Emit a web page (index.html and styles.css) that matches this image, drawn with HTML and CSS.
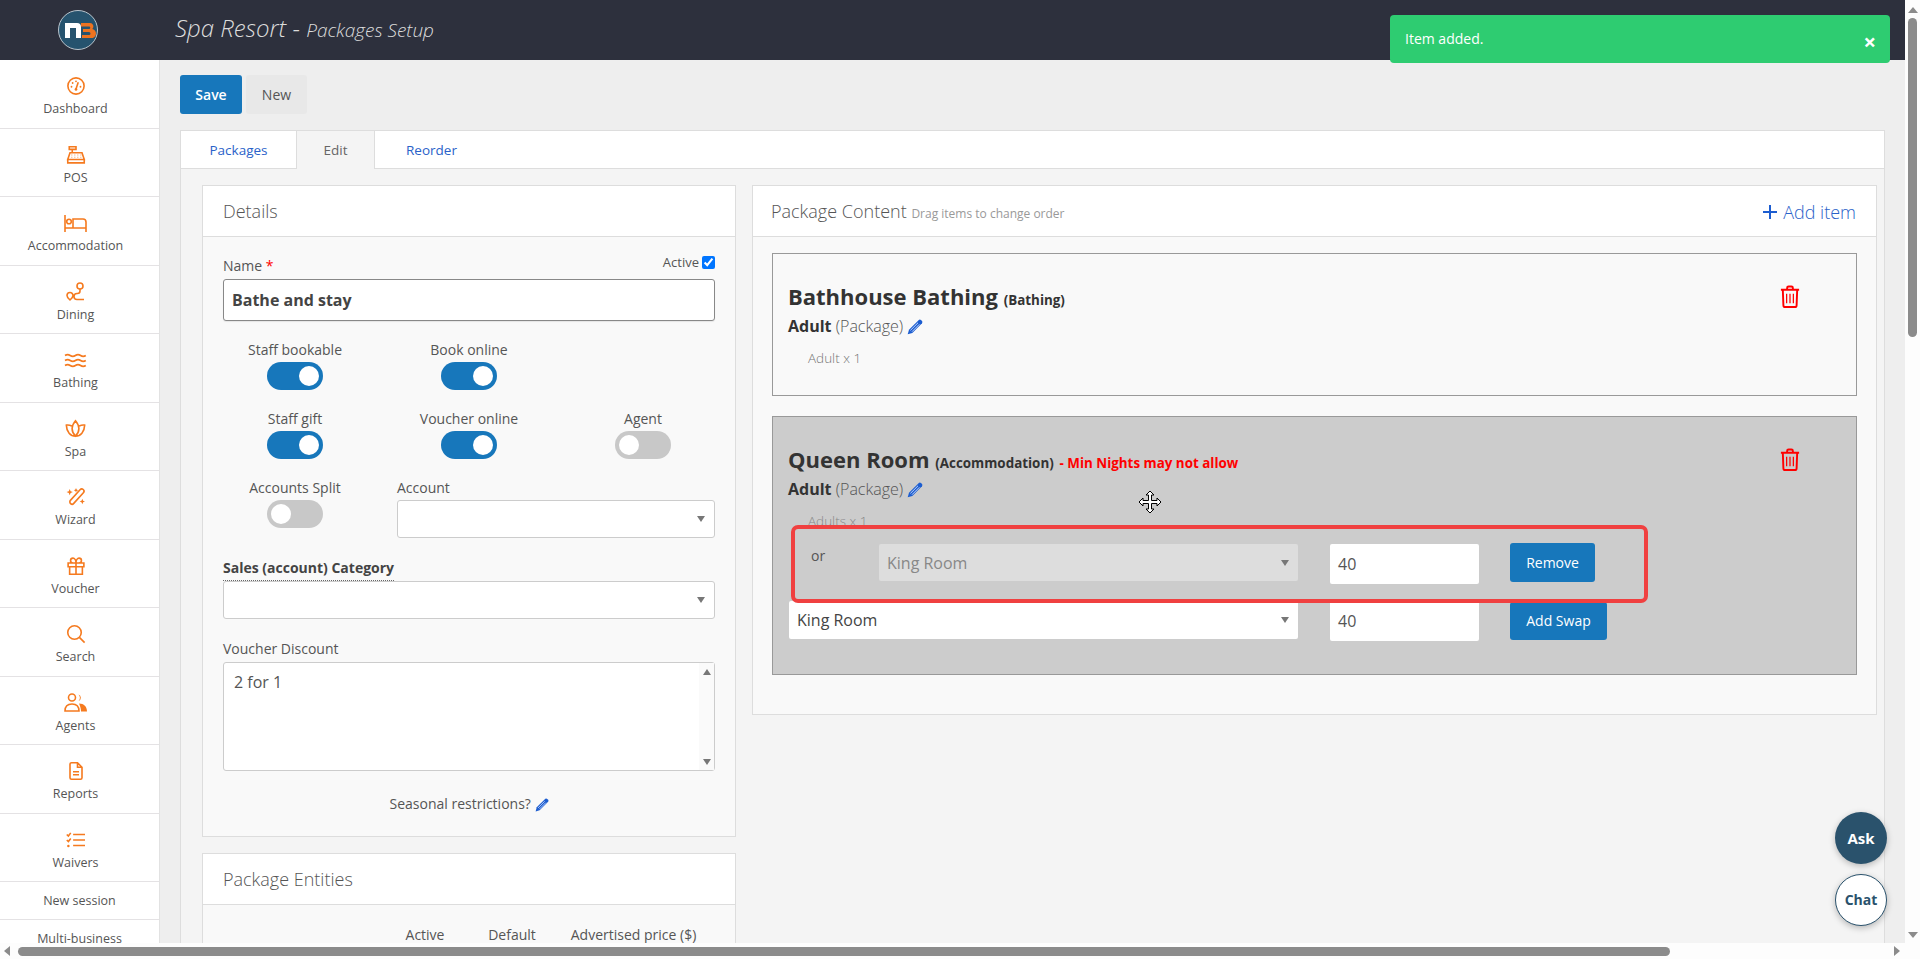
FILE: index.html
```html
<!DOCTYPE html>
<html lang="en">
<head>
<meta charset="utf-8">
<title>Spa Resort - Packages Setup</title>
<link rel="stylesheet" href="styles.css">
</head>
<body>
<svg class="defs" width="0" height="0" aria-hidden="true">
  <symbol id="pencil" viewBox="0 0 16 16"><path d="M11.800.9Q12.900.1 14 1l1 1.100q.9 1.100 0 2.100L5.300 14 .7 15.300 2 10.700Z" fill="#1c5dd0"/><path d="M3.400 11.400 11 3.800M5 12.700 12.400 5.300" stroke="#d5e3ff" stroke-width=".9" fill="none"/></symbol>
  <symbol id="trash" viewBox="0 0 20 24"><g fill="none" stroke="#f00" stroke-width="2"><path d="M.5 5h19M7 5V3a1.500 1.500 0 0 1 1.500-1.500h3A1.500 1.500 0 0 1 13 3v2M2.500 5l.6 16a2 2 0 0 0 2 2h9.800a2 2 0 0 0 2-2l.6-16"/><path d="M6.500 9v10M10 9v10M13.500 9v10" stroke-width="1.300"/></g></symbol>
</svg>
<div class="viewport">
  <div class="page-row">
    <div class="page">
      <header class="topbar">
        <div class="brand">
          <svg class="logo" width="40" height="40" viewBox="0 0 40 40" role="img" aria-label="NB logo"><circle cx="20" cy="20" r="19.500" fill="#26536e" stroke="#b9c4cc"/><path d="M7 28V13h12a4 4 0 0 1 4 4v11h-5V18h-6v10Z" fill="#fff"/><path d="M23 13h9a3.500 3.500 0 0 1 2.400 6 3.800 3.800 0 0 1-2 9H24v-3h7a1.500 1.500 0 0 0 0-3h-6v-3h6a1.300 1.300 0 0 0 0-2.600h-8Z" fill="#ee7320"/></svg>
        </div>
        <h1 class="page-title">Spa Resort - <small>Packages Setup</small></h1>
      </header>
      <div class="below">
        <nav class="sidebar">
          <a class="nav-item"><span class="nav-icon"><svg width="18" height="18" viewBox="0 0 24 24"><circle cx="12" cy="12" r="10.800"/><path d="M12 16 15 7"/><circle class="dot" cx="12" cy="16.500" r="1.800"/><circle class="dot" cx="6" cy="13" r="1.200"/><circle class="dot" cx="7.500" cy="8" r="1.200"/><circle class="dot" cx="12" cy="5.800" r="1.200"/><circle class="dot" cx="18" cy="13" r="1.200"/></svg></span><span>Dashboard</span></a>
          <a class="nav-item"><span class="nav-icon"><svg width="18" height="18" viewBox="0 0 24 24"><path d="M3 1h9v3.500H3zM7 4.500V9M4 9h16l3 9H1zM1 18h22v4.500H1z"/><path class="thin" d="M6 12h1M10 12h1M14 12h1M18 12h1M6 15h1M10 15h1M14 15h1M18 15h1"/></svg></span><span>POS</span></a>
          <a class="nav-item"><span class="nav-icon"><svg width="23" height="17" viewBox="0 0 23 17"><path d="M1 0v17M1 13h21M22 17V7a3 3 0 0 0-3-3H9v9"/><circle cx="5" cy="6.500" r="2.300"/></svg></span><span>Accommodation</span></a>
          <a class="nav-item"><span class="nav-icon"><svg width="19" height="19" viewBox="0 0 19 19"><circle cx="14" cy="4" r="3"/><path d="M14 7v2a2.500 2.500 0 0 1-2.500 2.500H11a3 3 0 0 0 0 6h7M4 18s-3-2.500-3-4.500a3 3 0 0 1 6 0C7 15.500 4 18 4 18Z"/></svg></span><span>Dining</span></a>
          <a class="nav-item"><span class="nav-icon"><svg width="21" height="15" viewBox="0 0 21 15"><path d="M0 2.500q2.600-1.800 5.200 0t5.200 0 5.200 0 5.200 0M0 7.500q2.600-1.800 5.200 0t5.200 0 5.200 0 5.200 0M0 12.500q2.600-1.800 5.200 0t5.200 0 5.200 0 5.200 0"/></svg></span><span>Bathing</span></a>
          <a class="nav-item"><span class="nav-icon"><svg width="21" height="17" viewBox="0 0 24 20"><path d="M12 1C9.500 4 8 7 8 10c0 4 2 7 4 9 2-2 4-5 4-9 0-3-1.500-6-4-9ZM7.500 7C5.500 6 3.500 5.700 1.200 6 1.500 14 6 19 12 19c6 0 10.500-5 10.800-13-2.300-.3-4.300 0-6.300 1"/></svg></span><span>Spa</span></a>
          <a class="nav-item"><span class="nav-icon"><svg width="20" height="18" viewBox="0 0 22 20"><rect x="9.500" y="-1" width="5" height="21" rx="2.500" transform="rotate(42 12 9.500)"/><path class="fill" d="m4 1 1 2.500L7.500 4.500 5 5.500 4 8 3 5.500.5 4.500 3 3.500ZM11 0l.7 1.800 1.800.7-1.800.7-.7 1.800-.7-1.800-1.800-.7 1.800-.7ZM18 12l.9 2.100 2.100.9-2.100.9-.9 2.100-.9-2.100-2.100-.9 2.100-.9Z"/></svg></span><span>Wizard</span></a>
          <a class="nav-item"><span class="nav-icon"><svg width="18" height="18" viewBox="0 0 24 24"><path d="M1.500 8h21v5h-21zM3.500 13v10h17V13M12 8v15M12 8C12 4 10 1.500 8 1.500a3.200 3.200 0 0 0 0 6.500M12 8c0-4 2-6.500 4-6.500a3.200 3.200 0 0 1 0 6.500"/></svg></span><span>Voucher</span></a>
          <a class="nav-item"><span class="nav-icon"><svg width="18" height="18" viewBox="0 0 24 24"><circle cx="10" cy="10" r="9"/><path d="m16.500 16.500 7 7"/></svg></span><span>Search</span></a>
          <a class="nav-item"><span class="nav-icon"><svg width="23" height="19" viewBox="0 0 23 19"><circle cx="8" cy="4.500" r="3.500"/><path d="M1 18c0-5 2.500-7 7-7s7 2 7 7Z"/><path class="fill" d="M14.500 1.500a3.500 3.500 0 0 1 0 6.600 5 5 0 0 0 0-6.600ZM15 10.500c5 0 8 3 8 8h-6c0-3-1-6-2-8Z"/></svg></span><span>Agents</span></a>
          <a class="nav-item"><span class="nav-icon"><svg width="14" height="18" viewBox="0 0 18 24"><path d="M1 3a2 2 0 0 1 2-2h8l6 6v14a2 2 0 0 1-2 2H3a2 2 0 0 1-2-2ZM11 1v6h6M5 13h8M5 17h8"/></svg></span><span>Reports</span></a>
          <a class="nav-item"><span class="nav-icon"><svg width="19" height="16" viewBox="0 0 24 20"><path d="M9 3h15M9 10h15M9 17h15M1 3l2 2 3-4M1 10l2 2 3-4"/><circle class="dot" cx="3" cy="17.500" r="1.600"/></svg></span><span>Waivers</span></a>
          <a class="nav-link">New session</a>
          <a class="nav-link">Multi-business</a>
        </nav>
        <main class="main">
          <div class="toolbar">
            <button class="btn btn-primary btn-save" type="button">Save</button>
            <button class="btn btn-light" type="button">New</button>
          </div>
          <section class="panel">
            <div class="tabs">
              <a class="tab tab-packages">Packages</a>
              <a class="tab tab-edit">Edit</a>
              <a class="tab tab-reorder">Reorder</a>
              <span class="tab-fill"></span>
            </div>
            <div class="panel-body">
              <div class="col">
                <section class="card">
                  <h2 class="card-head">Details</h2>
                  <div class="card-body details">
                    <div class="name-row">
                      <label class="lbl">Name <span class="req">*</span></label>
                      <label class="active-check">Active <input type="checkbox" checked></label>
                    </div>
                    <div class="field field-name">Bathe and stay</div>
                    <div class="toggle-grid">
                      <div class="toggle-cell"><span class="lbl">Staff bookable</span><span class="switch on"></span></div>
                      <div class="toggle-cell"><span class="lbl">Book online</span><span class="switch on"></span></div>
                      <div></div>
                      <div class="toggle-cell"><span class="lbl">Staff gift</span><span class="switch on"></span></div>
                      <div class="toggle-cell"><span class="lbl">Voucher online</span><span class="switch on"></span></div>
                      <div class="toggle-cell"><span class="lbl">Agent</span><span class="switch"></span></div>
                      <div class="toggle-cell"><span class="lbl">Accounts Split</span><span class="switch"></span></div>
                      <div class="account">
                        <span class="lbl">Account</span>
                        <div class="field field-select"><i class="caret"></i></div>
                      </div>
                    </div>
                    <label class="lbl lbl-strong">Sales (account) Category</label>
                    <div class="field field-select"><i class="caret"></i></div>
                    <label class="lbl lbl-voucher">Voucher Discount</label>
                    <div class="field field-area">
                      <span class="area-text">2 for 1</span>
                      <span class="area-bar"><i class="caret caret-up"></i><i class="caret"></i></span>
                    </div>
                    <div class="seasonal">Seasonal restrictions? <svg class="pencil" width="14" height="14"><use href="#pencil"/></svg></div>
                  </div>
                </section>
                <section class="card card-entities">
                  <h2 class="card-head">Package Entities</h2>
                  <div class="card-body entities">
                    <span>Active</span>
                    <span>Default</span>
                    <span>Advertised price ($)</span>
                  </div>
                </section>
              </div>
              <section class="card content-card">
                <div class="card-head head-split">
                  <h2 class="head-title">Package Content <small>Drag items to change order</small></h2>
                  <a class="add-item"><svg width="14" height="14" viewBox="0 0 14 14"><path d="M7 0v14M0 7h14" stroke="#1c5dd0" stroke-width="2"/></svg> Add item</a>
                </div>
                <div class="card-body content-body">
                  <article class="item">
                    <div class="item-main">
                      <div class="item-title">Bathhouse Bathing <small>(Bathing)</small></div>
                      <div class="item-sub"><b>Adult</b> (Package) <svg class="pencil" width="16" height="16"><use href="#pencil"/></svg></div>
                      <div class="item-qty">Adult x 1</div>
                    </div>
                    <svg class="trash" width="20" height="23"><use href="#trash"/></svg>
                  </article>
                  <article class="item item-active">
                    <div class="item-main">
                      <div class="item-title">Queen Room <small>(Accommodation)</small> <small class="warn">- Min Nights may not allow</small></div>
                      <div class="item-sub"><b>Adult</b> (Package) <svg class="pencil" width="16" height="16"><use href="#pencil"/></svg></div>
                      <div class="item-qty">Adults x 1</div>
                      <div class="swap-row swap-existing">
                        <span class="swap-or">or</span>
                        <div class="plain-select is-disabled">King Room<i class="caret"></i></div>
                        <div class="plain-input">40</div>
                        <button class="btn btn-primary btn-remove" type="button">Remove</button>
                      </div>
                      <div class="swap-row swap-new">
                        <div class="plain-select wide">King Room<i class="caret"></i></div>
                        <div class="plain-input">40</div>
                        <button class="btn btn-primary btn-add" type="button">Add Swap</button>
                      </div>
                    </div>
                    <svg class="trash" width="20" height="23"><use href="#trash"/></svg>
                  </article>
                </div>
              </section>
            </div>
          </section>
        </main>
      </div>
    </div>
    <div class="vscroll"><i class="arrow arrow-up"></i><i class="vthumb"></i><i class="vgap"></i><i class="arrow arrow-down"></i></div>
  </div>
  <div class="hscroll"><i class="arrow arrow-left"></i><i class="hthumb"></i><i class="hgap"></i><i class="arrow arrow-right"></i><i class="corner"></i></div>
</div>

<div class="toast"><span>Item added.</span><span class="toast-x">×</span></div>
<div class="highlight"></div>
<svg class="move-cursor" width="24" height="24" viewBox="0 0 24 24"><path d="M12 1l4 4h-2.500v5.500H19V8l4 4-4 4v-2.500h-5.500V19H16l-4 4-4-4h2.500v-5.500H5V16l-4-4 4-4v2.500h5.500V5H8Z" fill="#fff" stroke="#000" stroke-width="1"/></svg>
<a class="fab fab-ask">Ask</a>
<a class="fab fab-chat">Chat</a>
</body>
</html>
```

FILE: styles.css
```css
* { box-sizing: border-box; }
html, body { margin: 0; height: 100%; overflow: hidden; }
body { font: 14px/18px "Open Sans", "Noto Sans", sans-serif; color: #555; background: #eee; position: relative; }
.defs { position: absolute; }
h1, h2 { margin: 0; font-weight: 300; }
a { color: inherit; text-decoration: none; }
small { font-weight: inherit; }

.viewport { height: 959px; display: flex; flex-direction: column; }
.page-row { flex: 1; min-height: 0; display: flex; }
.page { flex: 1; min-width: 0; display: flex; flex-direction: column; }

.topbar { height: 60px; flex: none; background: #2d303d; display: flex; align-items: center; }
.brand { width: 159px; display: flex; justify-content: center; padding-right: 4px; }
.logo { display: block; }
.page-title { margin-left: 16px; color: #dcdcdc; font-size: 24px; line-height: 30px; font-style: italic; font-weight: 300; padding-bottom: 2px; }
.page-title small { font-size: 19px; }

.below { flex: 1; min-height: 0; display: flex; }
.sidebar { width: 160px; flex: none; background: #fff; border-right: 1px solid #e2e2e2; overflow: hidden; }
.nav-item { height: 68.5px; display: flex; flex-direction: column; align-items: center; padding-top: 14px; border-bottom: 1px solid #e4e2e4; font-size: 12.5px; color: #555; padding-right: 8px; }
.nav-icon { height: 24px; margin-bottom: 2px; display: flex; align-items: center; justify-content: center; }
.nav-icon svg { display: block; fill: none; stroke: #f57a1f; overflow: visible; }
.nav-icon svg * { stroke-width: 1.6px; vector-effect: non-scaling-stroke; }
.nav-icon svg .fill, .nav-icon svg .dot { fill: #f57a1f; stroke: none; }
.nav-icon svg .thin { stroke-width: 1.2px; }
.nav-link { display: block; height: 38px; line-height: 37px; text-align: center; font-size: 12.5px; border-bottom: 1px solid #e4e2e4; }

.main { flex: 1; min-width: 0; overflow: hidden; padding: 15px 20px 0; background: #eee; }
.toolbar { display: flex; gap: 4px; margin-bottom: 16px; }
.btn { font: inherit; border: 0; border-radius: 3px; padding: 0; cursor: pointer; }
.btn-primary { background: #1777bb; color: #fff; }
.btn-save { width: 62px; height: 39px; font-weight: 600; }
.btn-light { width: 61px; height: 39px; background: #e8e8e8; color: #555; font-weight: 400; }

.panel { border: 1px solid #ddd; background: #f4f4f4; height: 900px; }
.tabs { display: flex; height: 38px; font-size: 13.5px; }
.tab { display: flex; align-items: center; justify-content: center; height: 38px; background: #fff; border-bottom: 1px solid #ddd; color: #2a62c9; }
.tab-packages { width: 116px; border-right: 1px solid #ddd; }
.tab-edit { width: 77px; background: transparent; border-bottom: 0; color: #666; }
.tab-reorder { width: 114px; border-left: 1px solid #ddd; }
.tab-fill { flex: 1; background: #fff; border-bottom: 1px solid #ddd; }

.panel-body { display: grid; grid-template-columns: 534px 1125px; gap: 16px; padding: 16px 21px; align-items: start; }
.card { border: 1px solid #ddd; background: #f9f9f9; }
.card-head { height: 51px; padding: 1px 20px 0; background: #fff; border-bottom: 1px solid #ddd; font-size: 18px; line-height: 49px; font-weight: 300; color: #555; }
.card-body { padding: 0 20px; }

.details { padding-bottom: 23px; }
.name-row { display: flex; justify-content: space-between; align-items: flex-start; margin-top: 20px; height: 22px; }
.req { color: #f00; }
.active-check { display: flex; align-items: center; gap: 3px; font-size: 13px; line-height: 14px; margin-top: -2px; }
.active-check input { margin: 0; width: 13px; height: 13px; }
.field { background: #fff; border: 1px solid #ccc; border-radius: 3px; }
.field-name { height: 42px; border-color: #888; padding: 0 8px; font-size: 16px; font-weight: 700; line-height: 40px; color: #444; box-shadow: 0 1px 1px rgba(0,0,0,.08); }
.toggle-grid { display: grid; grid-template-columns: repeat(3, 174px); row-gap: 20px; margin: 20px -15px 0; }
.toggle-cell { display: flex; flex-direction: column; align-items: center; gap: 3px; }
.lbl { display: block; }
.switch { display: block; width: 56px; height: 28px; border-radius: 14px; background: #c8c8c8; padding: 4px; }
.switch::after { content: ""; display: block; width: 20px; height: 20px; border-radius: 50%; background: #fff; }
.switch.on { background: #1777bb; }
.switch.on::after { margin-left: 28px; }
.account { grid-column: span 2; padding: 0 15px; }
.account .lbl { margin-bottom: 3px; }
.field-select { height: 38px; display: flex; align-items: center; justify-content: flex-end; padding-right: 9px; }
.caret { display: block; width: 0; height: 0; border-left: 4px solid transparent; border-right: 4px solid transparent; border-top: 6px solid #777; }
.caret-up { border-top: 0; border-bottom: 6px solid #777; }
.lbl-strong { width: fit-content; margin-top: 20px; line-height: 20px; padding-bottom: 2px; border-bottom: 1px dotted #666; font-weight: 700; color: #444; }
.lbl-voucher { margin-top: 21px; margin-bottom: 4px; }
.field-area { height: 109px; display: flex; justify-content: space-between; padding-left: 10px; }
.area-text { font-size: 16px; line-height: 22px; padding-top: 8px; }
.area-bar { width: 15px; background: #fafafa; display: flex; flex-direction: column; justify-content: space-between; align-items: center; padding: 6px 0 5px; }
.seasonal { margin-top: 24px; height: 18px; text-align: center; }
.pencil { vertical-align: -3px; }

.card-entities { margin-top: 16px; }
.entities { height: 60px; display: grid; grid-template-columns: 60px 114px 129px; padding: 21px 0 0 192px; white-space: nowrap; text-align: center; }

.head-split { display: flex; justify-content: space-between; align-items: center; padding: 2px 20px 0 18px; }
.head-title { font-size: 18px; line-height: 24px; font-weight: 300; }
.head-title small { font-size: 12px; color: #999; font-weight: 400; }
.add-item { font-size: 18px; font-weight: 300; color: #2a62c9; display: flex; align-items: center; gap: 6px; }
.content-body { padding: 16px 19px 39px; }

.item { display: flex; align-items: flex-start; border: 1px solid #999; background: #f9f9f9; padding: 28px 56px 28px 15px; }
.item + .item { margin-top: 20px; }
.item-main { flex: 1; min-width: 0; }
.item-title { height: 28px; font-size: 22px; line-height: 28px; font-weight: 700; color: #333; white-space: nowrap; }
.item-title small { font-size: 13.4px; line-height: 1; }
.warn { color: #f00; }
.item-sub { height: 22px; margin-top: 5px; font-size: 16px; line-height: 22px; color: #555; font-weight: 300; }
.item-sub b { font-weight: 700; color: #333; }
.item-qty { margin-top: 12px; margin-left: 20px; font-size: 13.5px; color: #777; font-weight: 300; }
.trash { flex: none; margin-top: 3px; }
.item-active { background: #ccc; padding-bottom: 32px; }
.item-active .item-qty { color: #888; }

.swap-row { display: flex; align-items: flex-start; }
.swap-existing { margin-top: 14px; height: 40px; }
.swap-new { margin-top: 17px; height: 41px; }
.swap-or { width: 91px; padding: 3px 0 0 23px; font-size: 14px; }
.plain-select { width: 419px; height: 38px; padding: 0 9px 0 8px; background: #fff; border-radius: 2px; font-size: 16px; line-height: 38px; display: flex; align-items: center; justify-content: space-between; color: #444; }
.plain-select.wide { width: 509px; margin-left: 1px; }
.plain-select.is-disabled { height: 37px; background: #ddd; color: #888; }
.plain-input { width: 149px; height: 40px; margin-left: 32px; padding-left: 8px; background: #fff; border-radius: 2px; font-size: 16px; line-height: 40px; color: #555; }
.btn-remove { width: 85px; height: 39px; margin: -1px 0 0 31px; font-size: 14px; }
.btn-add { width: 97px; height: 38px; margin: 1px 0 0 31px; font-size: 14px; }

.vscroll { width: 15px; flex: none; background: #fdfdfd; display: flex; flex-direction: column; align-items: center; padding: 7px 0 5px; }
.arrow { display: block; width: 0; height: 0; flex: none; }
.arrow-up { border-left: 5px solid transparent; border-right: 5px solid transparent; border-bottom: 6px solid #8b8b8b; }
.arrow-down { border-left: 5px solid transparent; border-right: 5px solid transparent; border-top: 6px solid #8b8b8b; }
.arrow-left { border-top: 5px solid transparent; border-bottom: 5px solid transparent; border-right: 6px solid #8b8b8b; }
.arrow-right { border-top: 5px solid transparent; border-bottom: 5px solid transparent; border-left: 6px solid #8b8b8b; }
.vthumb { display: block; width: 9px; height: 319px; margin-top: 5px; border-radius: 5px; background: #8b8b8b; }
.vgap { flex: 1; }
.hscroll { height: 16px; flex: none; background: #fdfdfd; display: flex; align-items: center; padding-left: 4px; }
.hthumb { display: block; width: 1652px; height: 9px; margin-left: 8px; border-radius: 5px; background: #8b8b8b; }
.hgap { flex: 1; }
.corner { display: block; width: 20px; }

.toast { position: absolute; left: 1390px; top: 15px; width: 500px; height: 48px; padding: 0 15px; background: #2ecc71; color: #fff; border-radius: 4px; display: flex; align-items: center; justify-content: space-between; }
.toast-x { font-size: 22px; font-weight: 700; padding-top: 3px; margin-right: -1px; }
.highlight { position: absolute; left: 791px; top: 525px; width: 857px; height: 78px; border: 4px solid #f04040; border-radius: 7px; pointer-events: none; }
.move-cursor { position: absolute; left: 1138px; top: 490px; }
.fab { position: absolute; left: 1835px; width: 52px; height: 52px; border-radius: 50%; display: flex; align-items: center; justify-content: center; font-weight: 700; box-shadow: 0 2px 6px rgba(0,0,0,.25); }
.fab-ask { top: 812px; background: #2a526c; color: #fff; font-size: 15px; }
.fab-chat { top: 874px; background: #fff; color: #2a526c; border: 1px solid #2a526c; }
```
